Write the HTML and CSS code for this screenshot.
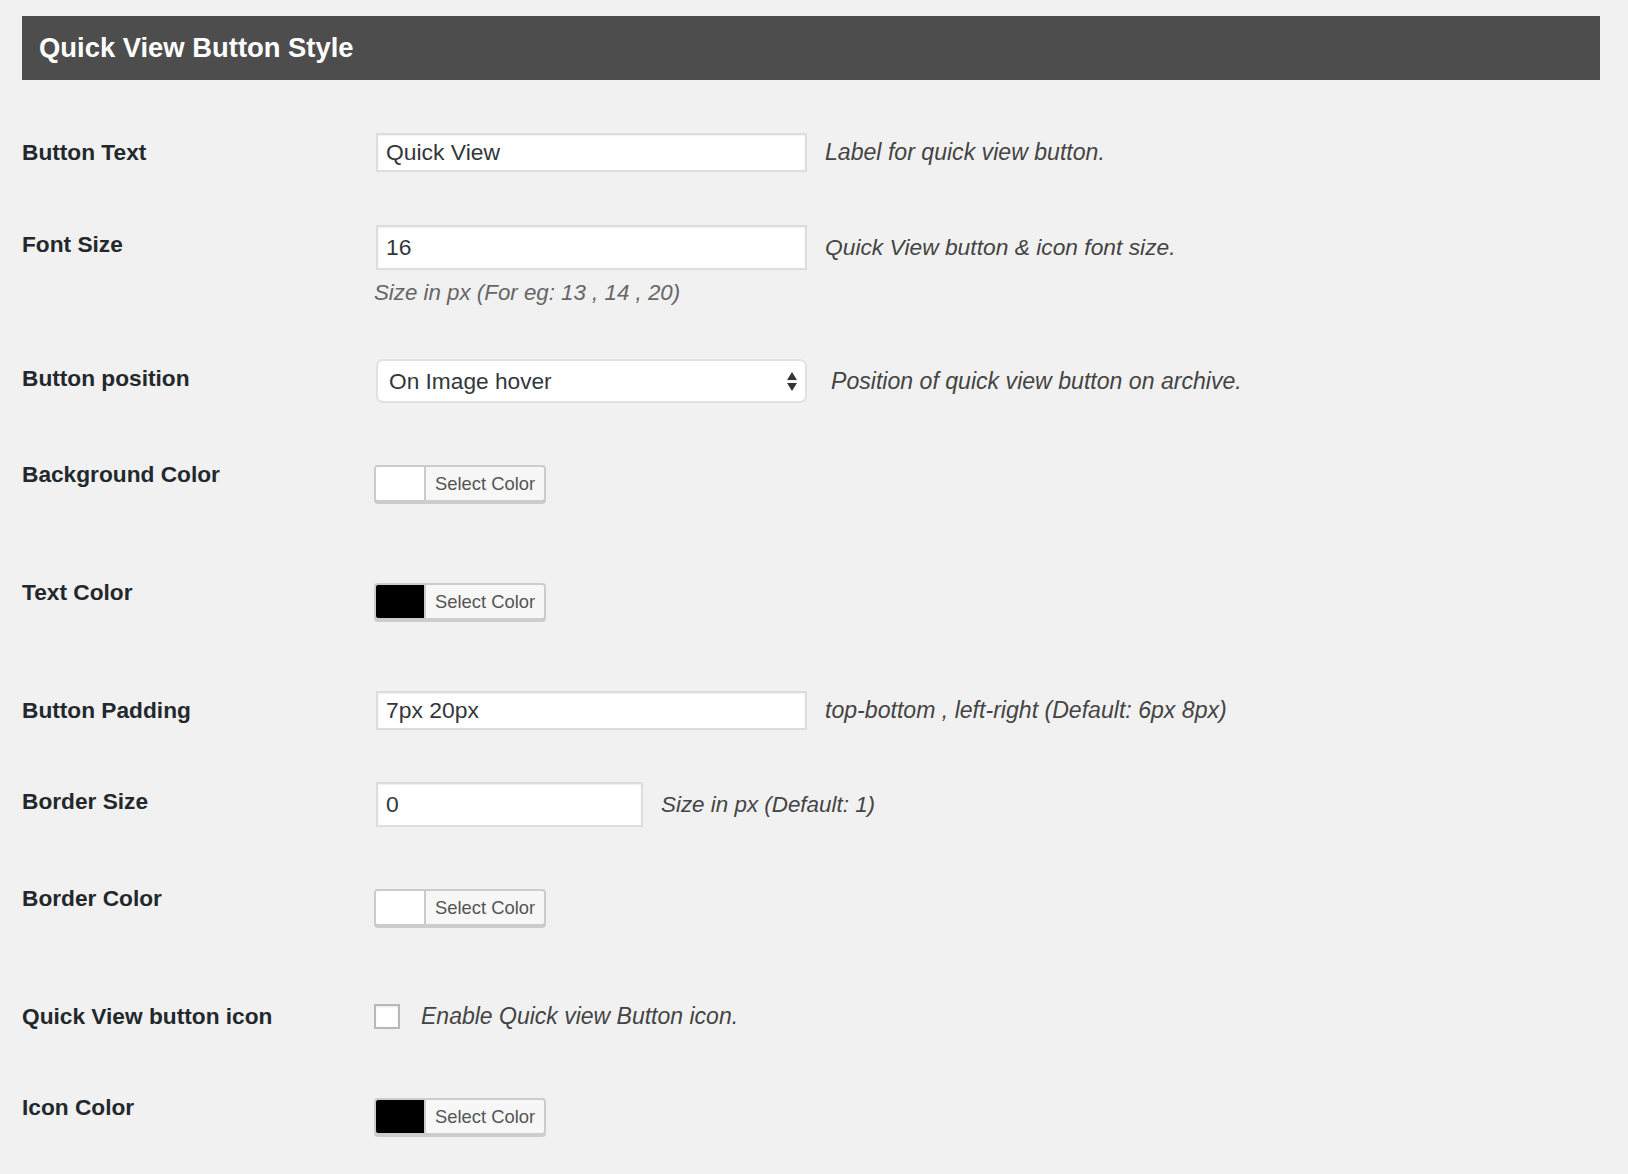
FILE: index.html
```html
<!DOCTYPE html>
<html lang="en">
<head>
<meta charset="utf-8">
<title>Quick View Button Style</title>
<link rel="stylesheet" href="styles.css">
</head>
<body>
<div class="wrap">
  <h2 class="section-title">Quick View Button Style</h2>

  <div class="form">
    <div class="row row-first">
      <div class="label">Button Text</div>
      <div class="field">
        <div class="line">
          <input class="input" type="text" value="Quick View">
          <span class="desc">Label for quick view button.</span>
        </div>
      </div>
    </div>

    <div class="row">
      <div class="label">Font Size</div>
      <div class="field">
        <div class="line">
          <input class="input input-tall" type="text" value="16">
          <span class="desc desc-mid">Quick View button &amp; icon font size.</span>
        </div>
        <p class="hint">Size in px (For eg: 13 , 14 , 20)</p>
      </div>
    </div>

    <div class="row">
      <div class="label">Button position</div>
      <div class="field">
        <div class="line">
          <div class="select">
            <span>On Image hover</span>
            <svg class="arrows" width="10" height="19" viewBox="0 0 10 19"><path d="M0 8 L5 0 L10 8 Z M0 11 L10 11 L5 19 Z" fill="#32373c"/></svg>
          </div>
          <span class="desc desc-wide">Position of quick view button on archive.</span>
        </div>
      </div>
    </div>

    <div class="row">
      <div class="label">Background Color</div>
      <div class="field">
        <div class="picker"><span class="swatch"></span><span class="picker-text">Select Color</span></div>
      </div>
    </div>

    <div class="row">
      <div class="label">Text Color</div>
      <div class="field">
        <div class="picker"><span class="swatch swatch-black"></span><span class="picker-text">Select Color</span></div>
      </div>
    </div>

    <div class="row">
      <div class="label">Button Padding</div>
      <div class="field">
        <div class="line">
          <input class="input" type="text" value="7px 20px">
          <span class="desc">top-bottom , left-right (Default: 6px 8px)</span>
        </div>
      </div>
    </div>

    <div class="row">
      <div class="label">Border Size</div>
      <div class="field">
        <div class="line">
          <input class="input input-tall input-short" type="text" value="0">
          <span class="desc desc-small">Size in px (Default: 1)</span>
        </div>
      </div>
    </div>

    <div class="row">
      <div class="label">Border Color</div>
      <div class="field">
        <div class="picker"><span class="swatch"></span><span class="picker-text">Select Color</span></div>
      </div>
    </div>

    <div class="row">
      <div class="label">Quick View button icon</div>
      <div class="field">
        <label class="check-line">
          <input class="check" type="checkbox">
          <span class="check-text">Enable Quick view Button icon.</span>
        </label>
      </div>
    </div>

    <div class="row">
      <div class="label">Icon Color</div>
      <div class="field">
        <div class="picker"><span class="swatch swatch-black"></span><span class="picker-text">Select Color</span></div>
      </div>
    </div>
  </div>
</div>
</body>
</html>
```

FILE: styles.css
```css
* {
  box-sizing: border-box;
}

body {
  margin: 0;
  background: #f1f1f1;
  font-family: "Liberation Sans", Arial, Helvetica, sans-serif;
  color: #23282d;
}

.wrap {
  padding: 16px 28px 20px 22px;
}

.section-title {
  margin: 0 0 53px;
  height: 64px;
  background: #4d4d4d;
  color: #ffffff;
  font-size: 27.4px;
  font-weight: bold;
  line-height: 64px;
  padding-left: 17px;
}

.row {
  display: grid;
  grid-template-columns: 352px 1fr;
  align-items: start;
  padding-bottom: 52px;
}

.row-first {
  padding-bottom: 53px;
}

.label {
  padding-top: 5px;
  font-size: 22.7px;
  line-height: 28px;
  font-weight: bold;
  color: #23282d;
}

.line {
  display: flex;
  align-items: baseline;
}

.input {
  margin: 0 0 0 2px;
  width: 431px;
  height: 39px;
  border: 2px solid #dddddd;
  border-radius: 0;
  background: #ffffff;
  box-shadow: inset 0 1px 2px rgba(0, 0, 0, 0.07);
  font-family: "Liberation Sans", Arial, sans-serif;
  font-size: 22.9px;
  color: #32373c;
  padding: 0 8px;
  outline: none;
}

.input-tall {
  height: 45px;
}

.input-short {
  width: 267px;
}

.desc {
  margin-left: 18px;
  font-size: 23.1px;
  font-style: italic;
  color: #444444;
}

.desc-mid {
  font-size: 22.8px;
}

.desc-small {
  font-size: 22.4px;
}

.desc-wide {
  margin-left: 24px;
}

.hint {
  margin: 9px 0 0 0;
  font-size: 22.3px;
  line-height: 28px;
  font-style: italic;
  color: #666666;
}

.select {
  margin-left: 2px;
  width: 431px;
  height: 44px;
  display: inline-flex;
  align-items: center;
  justify-content: space-between;
  border: 2px solid #e2e2e2;
  border-radius: 7px;
  background: #ffffff;
  padding: 0 8px 0 11px;
  font-size: 22.7px;
  color: #32373c;
}

.arrows {
  display: block;
}

.picker {
  display: inline-flex;
  margin: 10px 0 19px 0;
  height: 37px;
  border: 2px solid #cccccc;
  border-radius: 4px;
  box-shadow: 0 2px 0 #cccccc;
  background: #f7f7f7;
  overflow: hidden;
}

.swatch {
  width: 50px;
  border-right: 2px solid #cccccc;
  background: #ffffff;
}

.swatch-black {
  background: #000000;
}

.picker-text {
  padding: 0 9px 0 9px;
  font-size: 18.4px;
  line-height: 33px;
  color: #555555;
}

.check-line {
  display: flex;
  align-items: center;
  height: 39px;
}

.check {
  appearance: none;
  -webkit-appearance: none;
  margin: 0 21px 0 0;
  width: 26px;
  height: 25px;
  border: 2px solid #b4b9be;
  border-radius: 0;
  background: #ffffff;
  box-shadow: inset 0 1px 2px rgba(0, 0, 0, 0.1);
}

.check-text {
  font-size: 23px;
  font-style: italic;
  color: #444444;
}
```
